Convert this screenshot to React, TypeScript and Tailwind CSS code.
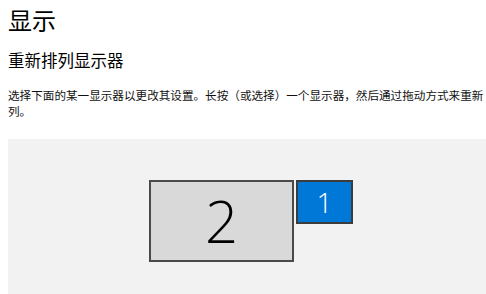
const cjk = { fontFamily: '"Noto Sans CJK SC", "Noto Sans", sans-serif' };

export default function App() {
  return (
    <div className="w-[486px] h-[294px] overflow-hidden bg-white text-black" style={cjk}>
      <div className="pl-[8px]">
        <h1 className="text-[24px] leading-[40px] font-normal">显示</h1>
        <h2 className="mt-[8px] text-[16.5px] leading-[24px] font-normal">重新排列显示器</h2>
        <p className="mt-[15px] w-[478px] text-[11.6px] leading-[16px] text-[#111]">
          选择下面的某一显示器以更改其设置。长按（或选择）一个显示器，然后通过拖动方式来重新列。
        </p>
        <div className="mt-[20px] h-[160px] bg-[#f2f2f2] pl-[141px] pt-[41px]">
          <div className="flex items-start gap-[2px]">
            <div className="w-[145px] h-[82px] border-2 border-[#4a4a4a] bg-[#d9d9d9] flex items-center justify-center">
              <span
                className="text-[58px] leading-none font-light text-black"
                style={{ fontFamily: '"Open Sans", "Noto Sans", sans-serif' }}
              >
                2
              </span>
            </div>
            <div className="w-[57px] h-[44px] border-2 border-[#3c3c3c] bg-[#0078d7] flex items-center justify-center">
              <span
                className="text-[28px] leading-none font-light text-white"
                style={{ fontFamily: '"Open Sans", "Noto Sans", sans-serif' }}
              >
                1
              </span>
            </div>
          </div>
        </div>
      </div>
    </div>
  );
}
